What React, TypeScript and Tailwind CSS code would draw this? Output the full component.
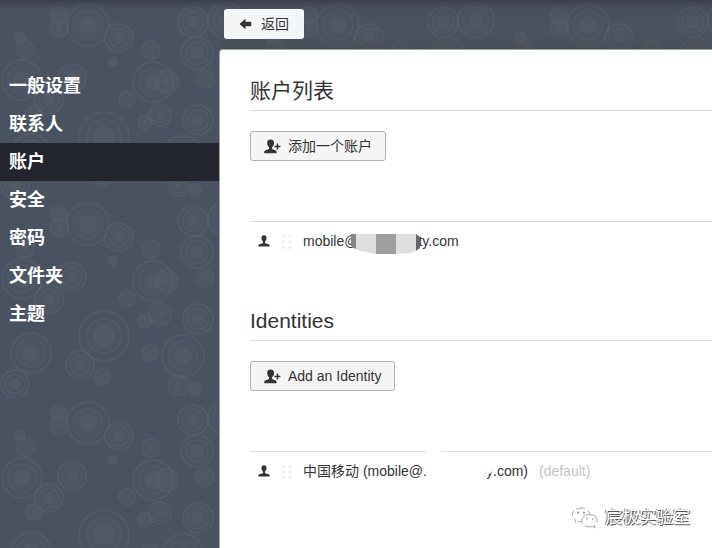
import React from 'react';

const BUBBLES: [number, number, number][] = [
  [88, 25, 21], [59, 28, 9], [59, 15, 8], [119, 38, 14], [113, 62, 4], [25, 49, 9],
  [20, 37, 5], [22, 80, 20], [72, 78, 14], [49, 100, 14], [34, 114, 8], [151, 50, 9],
  [153, 82, 20], [167, 82, 11], [127, 99, 8], [193, 22, 15], [197, 53, 16], [205, 79, 9],
  [226, 20, 18], [160, 115, 11], [145, 122, 7], [198, 120, 15], [104, 137, 25],
  [31, 154, 20], [80, 166, 14], [15, 185, 14], [102, 178, 8], [183, 157, 21],
  [150, 154, 8], [178, 186, 10], [195, 190, 6],
];

function Backdrop() {
  return (
    <svg className="absolute inset-0 h-full w-full" aria-hidden="true">
      <defs>
        <pattern id="bubbles" width="250" height="199" patternUnits="userSpaceOnUse">
          {BUBBLES.map(([x, y, r]) => (
            <g key={`${x}-${y}`}>
              <circle cx={x} cy={y} r={r} fill="#505963" fillOpacity=".15" stroke="#62666f" strokeOpacity=".36" strokeWidth="1.8" />
              <circle cx={x} cy={y} r={r * 0.7} fill="#505b64" fillOpacity=".2" stroke="#5e646c" strokeOpacity=".3" strokeWidth="1.6" />
              <circle cx={x} cy={y} r={r * 0.42} fill="#586166" fillOpacity=".42" />
            </g>
          ))}
        </pattern>
        <linearGradient id="shade" x1="0" y1="0" x2="0" y2="1">
          <stop offset="0" stopColor="#3b3b49" stopOpacity=".9" />
          <stop offset=".18" stopColor="#42485a" stopOpacity=".25" />
          <stop offset=".6" stopColor="#484c52" stopOpacity="0" />
          <stop offset="1" stopColor="#484c52" stopOpacity=".55" />
        </linearGradient>
        <linearGradient id="topShade" x1="0" y1="0" x2="0" y2="1">
          <stop offset="0" stopColor="#3b3b49" stopOpacity=".9" />
          <stop offset="1" stopColor="#42485a" stopOpacity="0" />
        </linearGradient>
      </defs>
      <rect width="100%" height="100%" fill="#485261" />
      <rect width="100%" height="100%" fill="url(#bubbles)" />
      <rect x="220" width="492" height="50" fill="url(#shade)" />
      <rect width="220" height="10" fill="url(#topShade)" />
    </svg>
  );
}

function PersonIcon({ className = '' }: { className?: string }) {
  return (
    <svg className={className} width="12" height="12" viewBox="0 0 12 12" fill="#333">
      <path d="M6 .3C4.300.3 3.500 1.400 3.500 3c0 1.600.6 2.700 1.500 3.500V8.300L1.300 9.300C.6 9.500.3 9.900.3 10.600V11.500H11.700V10.600C11.700 9.900 11.400 9.500 10.700 9.300L7 8.300V6.500C7.900 5.700 8.500 4.600 8.500 3 8.500 1.400 7.700.3 6 .3Z" />
    </svg>
  );
}

function AddPersonIcon() {
  return (
    <svg width="17" height="15" viewBox="0 0 17 15" fill="#333">
      <path d="M6.600.5C4.100.5 3 1.800 3.200 4.200c.1 1.900.8 3.200 1.800 4V9.900L1.200 11.400C.5 11.700.2 12.200.2 13V14.300H12.600V13C12.600 12.200 12.300 11.700 11.600 11.400L8.100 9.900V8.200C9.200 7.400 9.900 6.100 10 4.200 10.100 1.800 9 .5 6.600.5Z" />
      <path d="M12.700 4.500H14.200V6.700H16.400V8.200H14.200V10.400H12.700V8.200H10.500V6.700H12.700Z" />
    </svg>
  );
}

function GripIcon() {
  return (
    <svg width="12" height="14" viewBox="0 0 12 14" fill="#f0f0f0">
      <path d="M1 0h3v3H1zM7.500 0h3v3h-3zM1 5.500h3v3H1zM7.500 5.500h3v3h-3zM1 11h3v3H1zM7.500 11h3v3h-3z" />
    </svg>
  );
}

function Button({ width, children }: { width: string; children: React.ReactNode }) {
  return (
    <button className={`flex h-[30px] items-center gap-[7px] rounded-[3px] border border-[#b3b3b3] bg-[#f5f5f5] pl-[13px] text-[14px] whitespace-nowrap text-[#333] ${width}`}>
      <AddPersonIcon />
      {children}
    </button>
  );
}

function Mosaic() {
  return (
    <svg className="relative -ml-[7px] mt-[5px] shrink-0" width="69" height="21" viewBox="0 0 69 21">
      <path d="M0 0H5V15L0 12Z" fill="#858585" />
      <path d="M5 0H25V20L12 17.500 5 15Z" fill="#dedede" />
      <path d="M25 0H45V20H25Z" fill="#9e9e9e" />
      <path d="M45 0H65V17L58 19.500H45Z" fill="#dedede" />
      <path d="M65 0L69 3V14L65 17Z" fill="#686868" />
    </svg>
  );
}

const MENU = ['一般设置', '联系人', '账户', '安全', '密码', '文件夹', '主题'];

export default function App() {
  return (
    <div className="relative h-[548px] w-[712px] overflow-hidden font-['Liberation_Sans','Noto_Sans_CJK_SC',sans-serif] text-[#333]">
      <Backdrop />
      <div className="relative flex h-full">
        <nav className="w-[219px] shrink-0 pt-[67px]">
          {MENU.map((label) => (
            <div
              key={label}
              className={`flex h-[38px] items-center pl-[9px] text-[18px] font-bold text-white ${label === '账户' ? 'bg-[#22252d]' : ''}`}
            >
              {label}
            </div>
          ))}
        </nav>
        <div className="flex min-w-0 flex-1 flex-col">
          <header className="h-[49px] shrink-0 pt-[9px] pl-[5px]">
            <button className="flex h-[30px] w-20 items-center gap-[9px] rounded-[3px] bg-[#f4f5f7] pl-[15px] text-[14px]">
              <svg width="13" height="12" viewBox="0 0 13 12" fill="#333">
                <path d="M.5 6L6.500.8V3.800H12.200V8.200H6.500V11.200Z" />
              </svg>
              返回
            </button>
          </header>
          <main className="flex-1 rounded-tl-[4px] border-t border-l border-[#9ba0a8] bg-white pl-[30px]">
            <h1 className="flex h-[61px] items-end border-b border-[#dcdcdc] pb-1 text-[21px] leading-[31px]">账户列表</h1>
            <div className="pt-5">
              <Button width="w-[136px]">添加一个账户</Button>
            </div>
            <div className="mt-[60px] flex h-[40px] items-center border-t border-[#dcdcdc] pl-2 text-[14px]">
              <PersonIcon className="mb-0.5" />
              <span className="ml-[11px]"><GripIcon /></span>
              <span className="ml-[10px]">mobile@</span>
              <Mosaic />
              <span className="-ml-[2px]">ty.com</span>
            </div>
            <h2 className="mt-[39px] flex h-[41px] items-end border-b border-[#dcdcdc] pb-1 text-[21px] leading-[31px]">Identities</h2>
            <div className="pt-5">
              <Button width="w-[145px]">Add an Identity</Button>
            </div>
            <div className="mt-[60px] flex">
              <div className="h-px w-[176px] bg-[#dcdcdc]" />
              <div className="ml-[15px] h-px flex-1 bg-[#dcdcdc]" />
            </div>
            <div className="flex h-[39px] items-center pl-2 text-[14px] whitespace-nowrap">
              <PersonIcon className="mb-0.5" />
              <span className="ml-[11px]"><GripIcon /></span>
              <span className="ml-[10px] w-[123px] overflow-hidden">中国移动 (mobile@.</span>
              <span className="ml-[61px] flex w-[6px] justify-end overflow-hidden [clip-path:polygon(0_70%,100%_45%,100%_100%,0_100%)]">y</span>
              <span>.com)</span>
              <span className="ml-[11px] text-[#c5c5c5]">(default)</span>
            </div>
          </main>
        </div>
      </div>
      <div className="absolute top-[505px] left-[571px] flex items-center gap-[7px]">
        <svg width="27" height="25" viewBox="0 0 27 25" fill="white" stroke="#999" strokeWidth=".9">
          <path d="M10 3C5 3 1.500 6 1.500 9.700c0 2.300 1.200 4.200 3.200 5.500L4 17.700l3-1.500c1 .4 2 .5 3 .5 5 0 8.700-3 8.700-6.800S15 3 10 3Z" strokeDasharray="5 3" />
          <path d="M18.500 9.500c-4.400 0-7.700 2.700-7.700 6.200s3.300 6.200 7.700 6.200c1 0 2-.2 2.800-.5l2.600 1.500-.7-2.400c1.800-1.200 2.900-2.900 2.900-4.800 0-3.500-3.300-6.200-7.600-6.200Z" strokeDasharray="14 3" />
          <g fill="#888" stroke="none">
            <circle cx="7" cy="7.500" r="1" /><circle cx="13" cy="7.500" r="1" />
            <circle cx="16" cy="14" r=".8" /><circle cx="21.500" cy="14" r=".8" />
          </g>
        </svg>
        <span className="text-[17px] leading-[25px] text-white [text-shadow:1px_1px_0_#555,-1px_0_0_#777]">宸极实验室</span>
      </div>
    </div>
  );
}
